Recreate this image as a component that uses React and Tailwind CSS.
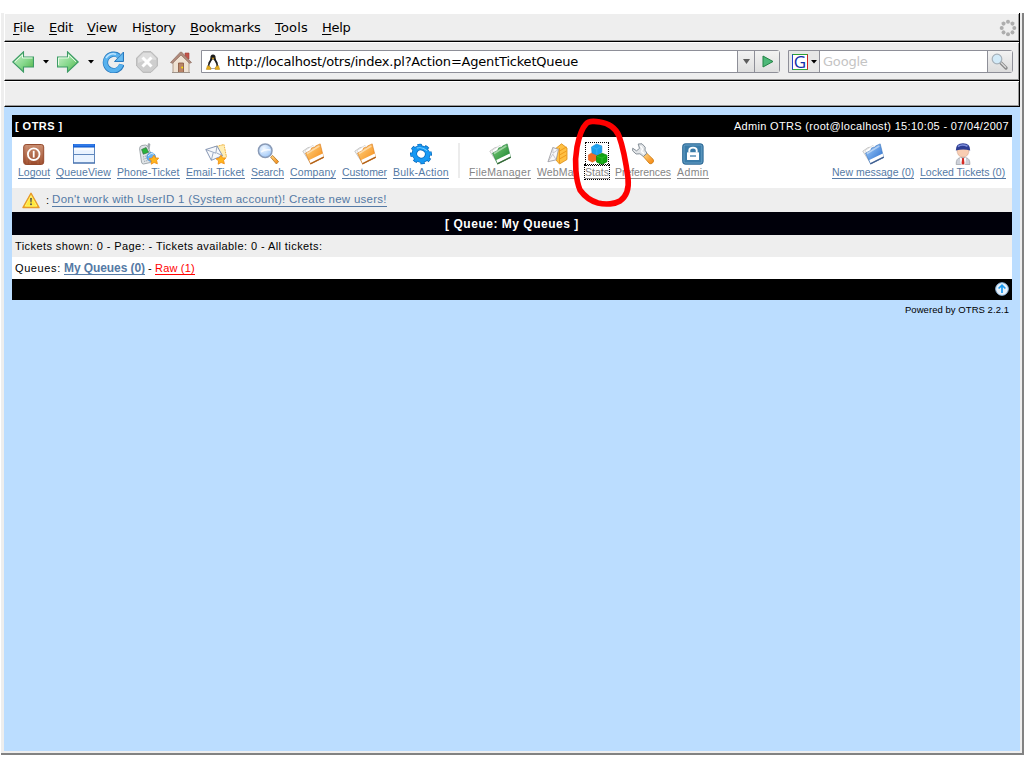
import React from 'react';

const Defs = () => (
  <svg width="0" height="0" className="absolute">
    <defs>
      <linearGradient id="green" x1="0" y1="0" x2="1" y2="1">
        <stop offset="0" stopColor="#d2f3d0" /><stop offset="0.55" stopColor="#86d88c" /><stop offset="1" stopColor="#4fae3e" />
      </linearGradient>
      <linearGradient id="orange" x1="0" y1="0" x2="1" y2="1">
        <stop offset="0" stopColor="#ffd98a" /><stop offset="1" stopColor="#f58208" />
      </linearGradient>
      <linearGradient id="leaf" x1="0" y1="0" x2="1" y2="1">
        <stop offset="0" stopColor="#7fd07c" /><stop offset="1" stopColor="#0e7a26" />
      </linearGradient>
      <linearGradient id="azure" x1="0" y1="0" x2="1" y2="1">
        <stop offset="0" stopColor="#a8d4ff" /><stop offset="1" stopColor="#1c62c8" />
      </linearGradient>
      <linearGradient id="brown" x1="0" y1="0" x2="0" y2="1">
        <stop offset="0" stopColor="#c98d70" /><stop offset="1" stopColor="#9b4a2a" />
      </linearGradient>
      <radialGradient id="lens" cx="0.4" cy="0.35" r="0.7">
        <stop offset="0" stopColor="#f2f8ff" /><stop offset="1" stopColor="#9cc6f8" />
      </radialGradient>
    </defs>
  </svg>
);

const Icon = ({ children, size = 22 }) => (
  <svg width={size} height={size} viewBox="0 0 22 22" className="block shrink-0">{children}</svg>
);

const Star = () => (
  <path d="M16 12.2l1.5 2.7 3.2.2-2.1 2.4.8 3.3-3.3-1.3-2.9 1.7.3-3.4-2.5-2 3.2-.8z" fill="#ffb61c" stroke="#f08a10" strokeWidth=".8" />
);

const Folder = ({ fill, edge }) => (
  <Icon>
    <path d="M.8 8.2L6 4.600l2.500-.4 2 5-2.500 10.300z" fill="#f4f4f4" stroke="#bdbdbd" strokeWidth=".8" />
    <path d="M3.200 7.400L11 2.300l3 5-6 10z" fill="#fff" stroke="#c9c9c9" strokeWidth=".6" />
    <path d="M3.500 10.200L8.500 7.500l1.300-2.700 2.700-.3 1-1.500L18.200.9l3.400 13.600L8.500 20.800z" fill={fill} stroke={edge} strokeWidth=".6" />
    <path d="M7.300 17L20.700 10.600l.9 3.300-13 6.500z" fill="#fff" />
    <path d="M8.300 20.800L21.700 14.200" stroke={edge} strokeWidth="1.300" />
    <path d="M8.300 20.800L21.700 14.200" stroke="#5a3326" strokeOpacity=".3" strokeWidth="1.300" />
    <path d="M5 10.500L17.300 3" stroke="#fff" strokeOpacity=".45" strokeWidth="1.500" />
  </Icon>
);

const LogoutIcon = () => (
  <Icon>
    <rect x=".7" y="1.5" width="20" height="20" rx="2.4" fill="url(#brown)" stroke="#954b2e" />
    <path d="M4 2v19M7 2v19M15 2v19M18 2v19" stroke="#eab59a" strokeOpacity=".2" />
    <circle cx="10.7" cy="11.2" r="5.8" fill="none" stroke="#fff" strokeWidth="1.8" />
    <path d="M10.7 7.8v6.8" stroke="#fff" strokeWidth="1.8" />
  </Icon>
);
const QueueIcon = () => (
  <Icon>
    <path d="M0 1h22v19.500H0z" fill="#5f87bd" />
    <path d="M0 1h22v3.500H0z" fill="#1763da" />
    <path d="M1 2h20" stroke="#4a91f3" />
    <path d="M1 4.800h20v6.200H1zM1 12h20v7.500H1z" fill="#e9f3ff" />
    <path d="M1 4.800h20v2.500H1z" fill="#fafcff" />
    <path d="M0 20h22" stroke="#3b67a6" />
  </Icon>
);
const PhoneIcon = () => (
  <Icon>
    <path d="M9 5.500L10.400.6 12 1l-.8 4.900z" fill="#a6aeb4" stroke="#80898f" strokeWidth=".5" />
    <path d="M1.600 5.800Q1.500 3 4 2.500L7.500 2Q9.500 2.200 10.300 4.500L14.500 14.500l-2 5-7 1.500Q3.800 21 3.500 19z" fill="#e0e4e7" stroke="#8b959b" strokeWidth=".8" />
    <path d="M3.600 6.500l4.500-2 2.600 4.800-5.400 1.900z" fill="#27b53b" stroke="#3c6b49" strokeWidth=".7" />
    <path d="M5 14l6-2M5.300 16.200l6-2M6 18.400l4-1" stroke="#9aa4ab" strokeWidth="1" strokeDasharray="1.300 .9" />
    <circle cx="13.200" cy="14" r="4.300" fill="#69b2f2" stroke="#3385d1" strokeWidth=".7" />
    <path d="M10 13q3-4 6-2" stroke="#d6efff" fill="none" />
    <Star />
  </Icon>
);
const EmailIcon = () => (
  <Icon>
    <path d="M9 4L19 1.500 21.500 14 17 17z" fill="#ffeeb5" stroke="#ecab32" strokeWidth=".9" strokeDasharray="1.800 .7" />
    <path d="M.8 6.500L12 3l5.500 9.700L6.300 17.300z" fill="#f6f8fb" stroke="#8797b4" strokeWidth="1" />
    <path d="M.8 6.500l10 3.700L12 3M6.300 17.300L8.200 9.700m3.300.2l6 2.800" fill="none" stroke="#8797b4" strokeWidth=".8" />
    <Star />
  </Icon>
);
const SearchIcon = () => (
  <Icon>
    <path d="M13.6 14.2l2-1.8 6 6.2-2.2 2.4z" fill="url(#orange)" stroke="#ae7523" strokeWidth=".8" />
    <circle cx="8.2" cy="7.7" r="6.8" fill="url(#lens)" stroke="#8a9bb7" strokeWidth="1.5" />
    <path d="M4 9q4-3 9.5-2" fill="none" stroke="#fff" strokeWidth="1.6" strokeOpacity=".8" />
  </Icon>
);
const GearIcon = () => (
  <Icon>
    <g transform="translate(11 11) rotate(25) scale(1.030 .920)">
      <circle r="6.500" fill="none" stroke="#0668bb" strokeWidth="5.400" />
      <circle r="9.600" fill="none" stroke="#0668bb" strokeWidth="2.600" strokeDasharray="4.200 3.340" />
      <circle r="6.600" fill="none" stroke="#1699f4" strokeWidth="3.900" />
      <circle r="9.200" fill="none" stroke="#1699f4" strokeWidth="2" strokeDasharray="2.800 4.426" strokeDashoffset="-.6" />
      <path d="M-6-4Q-2-8 4-6" fill="none" stroke="#83d2ff" />
    </g>
  </Icon>
);
const WebMailIcon = () => (
  <Icon>
    <path d="M9 5.3L14.5.8 20 5v11.5L12.5 21 9 17z" fill="#ffc043" stroke="#d98a12" strokeWidth=".8" />
    <path d="M12.5 8l7-4M12.5 12l7-4M12.5 16l7-4M12.5 5v15" stroke="#f09a18" strokeWidth="1" />
    <path d="M5.800 4.500l5.700 1.800-2.300 10.500L1 18.700z" fill="#f8f8fa" stroke="#93939b" strokeWidth=".8" />
    <path d="M5.800 4.500l.2 5.700 5.500-3.900M1 18.700l4.800-7.500 3.400 5.600" fill="none" stroke="#b3b3ba" strokeWidth=".7" />
  </Icon>
);
const StatsIcon = () => (
  <Icon>
    <path d="M6.2 9.7l4.500 2v5l-4.300 2.500-4-2.200v-5z" fill="#f26c24" stroke="#e4591c" strokeWidth=".6" />
    <path d="M5.500 4l5-3L15.800 3v6.200l-4.600 3-5.200-2.300z" fill="#1ba1ef" stroke="#128bd4" strokeWidth=".6" />
    <path d="M5.800 4l5 1.800L15.500 3M10.800 5.800v5.500" fill="none" stroke="#4bb8f8" strokeWidth=".6" />
    <path d="M10.500 13l5.500-2.800 5 2v6.500l-5 2.800-5.500-2.500z" fill="#11a512" stroke="#078209" strokeWidth=".7" />
    <path d="M10.800 13.200l5.200 1.800 4.800-2.500M16 15v5.500" fill="none" stroke="#35c232" strokeWidth=".7" />
  </Icon>
);
const WrenchIcon = () => (
  <Icon>
    <path d="M11.200 13.300l3.300-3.300 6.500 6.200c2 2.200-1.500 6-3.900 4z" fill="url(#orange)" stroke="#c9780c" strokeWidth=".8" />
    <path d="M.7 5.200l3.800 2.600 3-2.400L6.200 1 10 .8l3.200 3.400-.2 3 2 3-3.600 3.300-3.500-2.700-3.800.2L.6 7.800z" fill="#e2e5e8" stroke="#7b848d" strokeWidth=".9" />
    <path d="M8.500 3l2 3-1 2.500 2.700 2.200" fill="none" stroke="#fff" strokeWidth="1.300" />
  </Icon>
);
const LockIcon = () => (
  <Icon>
    <rect x=".7" y=".8" width="20.4" height="20.4" rx="2.5" fill="#3b7ca9" stroke="#2d6894" />
    <rect x="2" y="2" width="17.8" height="18" rx="1.5" fill="none" stroke="#76adce" strokeOpacity=".7" />
    <rect x="5" y="9.3" width="12" height="7.8" rx=".6" fill="#fff" />
    <path d="M7.300 9.500V7.200q0-2.600 3.700-2.600t3.700 2.600v2.300" fill="none" stroke="#fff" strokeWidth="1.900" />
    <path d="M8 13h6" stroke="#3d7eaa" strokeWidth="1.3" />
  </Icon>
);
const AgentIcon = () => (
  <Icon>
    <path d="M4.200 21.500q-.4-6.200 4.300-7h5q4.700.8 4.400 7z" fill="#cdd0d8" stroke="#999da5" strokeWidth=".7" />
    <path d="M7.800 14.200L11 16.200l3.200-2-1 7.300H8.800z" fill="#fff" />
    <path d="M10.200 15h1.600l.7 5.500-1.500 1.200-1.500-1.200z" fill="#d32b24" />
    <path d="M5 6h12q.4 7.700-6 8.200Q4.600 13.700 5 6z" fill="#f8cdb2" stroke="#c9977e" strokeWidth=".5" />
    <path d="M3.800 7.600Q3.600.3 11 .3t7.200 7.300Q11.500 5.200 3.800 7.600z" fill="#2e3d93" />
    <path d="M6 3.500q4-3 9.500-.2" stroke="#7d8edb" fill="none" strokeWidth="1.600" />
  </Icon>
);

const Nav = ({ icon, label, box, muted, focus }) => (
  <div className={`flex shrink-0 flex-col items-center ${box}`}>
    <div className={focus ? 'outline-1 outline-dotted outline-black' : ''}>{icon}</div>
    <a
      className={`block h-[14px] w-full border-b text-[10.5px] leading-[15px] whitespace-nowrap ${
        focus ? 'outline-1 outline-dotted outline-black' : ''
      } ${muted ? 'border-[#8b8b8b] text-[#858585]' : 'border-[#557aa5] text-[#557aa5]'}`}
    >
      {label}
    </a>
  </div>
);

const orangeFolder = <Folder fill="url(#orange)" edge="#d87714" />;

const Caret = () => (
  <svg width="6" height="4" viewBox="0 0 6 4" className="block shrink-0"><path d="M0 0h6L3 3.500z" fill="#000" /></svg>
);

const Menu = ({ k, pre = '', rest, box }) => (
  <span className={`shrink-0 whitespace-nowrap ${box}`}>{pre}<u className="underline-offset-2">{k}</u>{rest}</span>
);

export default function App() {
  return (
    <div className="relative h-[768px] w-[1024px] overflow-hidden bg-white pt-[13px] font-['Liberation_Sans',Arial,sans-serif] text-[11px] text-black">
      <Defs />
      <div className="ml-px flex h-[742px] w-[1023px] flex-col border-r-2 border-b-2 border-[#828282] bg-[#eeeeee] pr-[2px] pb-[2px] pl-[3px]">
        <div className="flex flex-col border-r border-black font-['DejaVu_Sans',sans-serif] text-[13px]">
          <div className="flex h-[29px] shrink-0 items-center border-t border-l border-b border-t-white border-l-white border-b-black pl-2 shadow-[inset_-1px_-1px_0_#9a9a9a]">
            <Menu k="F" rest="ile" box="w-[36px] tracking-[-0.1px]" />
            <Menu k="E" rest="dit" box="w-[38px] tracking-[-0.3px]" />
            <Menu k="V" rest="iew" box="w-[45px] tracking-[-0.15px]" />
            <Menu pre="Hi" k="s" rest="tory" box="w-[58px] tracking-[-0.4px]" />
            <Menu k="B" rest="ookmarks" box="w-[85px] tracking-[-0.22px]" />
            <Menu k="T" rest="ools" box="w-[47px] tracking-[0.2px]" />
            <Menu k="H" rest="elp" box="w-[40px] tracking-[-0.3px]" />
            <svg width="18" height="18" viewBox="-9 -9 18 18" className="mr-[2px] ml-auto block">
              {[0, 45, 90, 135, 180, 225, 270, 315].map((a) => (
                <circle key={a} cy="-6.300" r="2" fill="#adadad" transform={`rotate(${a})`} />
              ))}
            </svg>
          </div>

          <div className="flex h-[39px] shrink-0 items-center border-t border-l border-b border-t-white border-l-white border-b-black pl-[7px] shadow-[inset_-1px_-1px_0_#9a9a9a]">
            <Icon><path d="M.8 11L11.500.8v5.200h10v10h-10V21z" fill="url(#green)" stroke="#3d9b66" strokeWidth="1.100" /><path d="M2.800 11L10.500 3.800V7h10" fill="none" stroke="#e8fae8" /></Icon>
            <div className="flex w-[23px] justify-center"><Caret /></div>
            <Icon><path d="M21.200 11L10.500.8v5.200H.5v10h10V21z" fill="url(#green)" stroke="#3d9b66" strokeWidth="1.100" /><path d="M1.500 14V7h10V3.800l7.500 7" fill="none" stroke="#e8fae8" /></Icon>
            <div className="flex w-[23px] justify-center"><Caret /></div>
            <Icon>
              <path d="M19.800 13.500A8.300 8.300 0 1 1 17 5" fill="none" stroke="#2a79bd" strokeWidth="5.400" />
              <path d="M12.500 10.500h9V1z" fill="#54aeea" stroke="#2a79bd" />
              <path d="M19.300 13.500A8.100 8.100 0 1 1 16.800 5.300" fill="none" stroke="#58b2ee" strokeWidth="4" />
              <path d="M4 7Q8 1.500 14 3.300" fill="none" stroke="#bfe5ff" strokeWidth="1.500" />
              <path d="M14.500 9.500h6v-6z" fill="#6bbcf0" />
            </Icon>
            <div className="w-3" />
            <Icon>
              <path d="M7 .7h8L21.300 7v8L15 21.300H7L.7 15V7z" fill="#cecece" stroke="#b3b3b3" />
              <path d="M2 9V7.500L7.500 2h7L20 7.500V9q-9-2-18 3z" fill="#dedede" />
              <path d="M6.500 6.500l9 9m0-9l-9 9" stroke="#fff" strokeWidth="3" />
            </Icon>
            <div className="w-3" />
            <Icon>
              <path d="M15 2h4v6h-4z" fill="#c4544a" stroke="#9d4138" strokeWidth=".6" />
              <path d="M3 10l8-8 8 8v11.500H3z" fill="#efe2d3" stroke="#a58e78" strokeWidth=".8" />
              <path d="M.5 11.500L10.500 1h1l10 10.500-2 .8L11 4l-8.500 8.300z" fill="#b08a7c" stroke="#8e6d60" strokeWidth=".7" />
              <path d="M8.500 12h5v9.500h-5z" fill="#b98468" stroke="#84543c" strokeWidth=".8" />
              <circle cx="12.200" cy="16.500" r=".9" fill="#ffe500" />
              <path d="M2 21.500h18" stroke="#9e948c" />
            </Icon>
            <div className="ml-[9px] flex h-[23px] w-[579px] rounded-r-[3px] border border-[#8e8f98]">
              <div className="flex flex-1 items-center bg-white pl-[3px]">
                <svg width="16" height="16" viewBox="0 0 16 16" className="block">
                  <path d="M8 .5q2.800 0 2.600 3.500.2 2 2 4.600 1.200 3-.6 5.900H4q-1.800-3-.6-5.900 2-2.600 2-4.600Q5.200.5 8 .5z" fill="#1c1c1c" />
                  <path d="M8 5q2.200 2 3.200 5t-.8 4.300H5.600Q3.700 13 4.800 10T8 5z" fill="#fff" />
                  <path d="M6.500 3.700h3L8 5.500z" fill="#e6a817" />
                  <path d="M2.500 11.500l3 1.500.5 2.400H1.300zM13.500 11.500l-3 1.500-.5 2.400h4.700z" fill="#e5ad1d" stroke="#b8820d" strokeWidth=".5" />
                </svg>
                <span className="ml-[6px] tracking-[-0.2px] whitespace-nowrap">http://localhost/otrs/index.pl?Action=AgentTicketQueue</span>
              </div>
              <div className="flex w-[17px] items-center justify-center border-l border-[#8e8f98] bg-gradient-to-b from-[#f2f2f2] to-[#dedede]">
                <svg width="7" height="5" className="block"><path d="M0 0h7L3.500 5z" fill="#5c5c5c" /></svg>
              </div>
              <div className="flex w-[25px] items-center justify-center border-l border-[#8e8f98] bg-gradient-to-b from-[#f2f2f2] to-[#dedede]">
                <svg width="12" height="13" className="mr-[-2px] block"><path d="M1 1l10 5.500L1 12z" fill="#4db878" stroke="#238346" /></svg>
              </div>
            </div>
            <div className="ml-2 flex h-[23px] w-[225px] rounded-r-[3px] border border-[#8e8f98]">
              <div className="flex w-[31px] items-center border-r border-[#8e8f98] bg-[#e7e7e7] pl-[3px]">
                <div className="flex h-4 w-4 items-center justify-center border border-t-[#2d9e33] border-r-[#d22222] border-b-[#34a93a] border-l-[#2345c8] bg-white font-['Open_Sans',sans-serif] text-[17px] leading-none text-[#0f2ba8]">G</div>
                <div className="ml-[3px]"><Caret /></div>
              </div>
              <div className="flex flex-1 items-center bg-white pl-[3px] tracking-[-0.2px] text-[#c4c4c4]">Google</div>
              <div className="flex w-[25px] items-center justify-center border-l border-[#8e8f98] bg-gradient-to-b from-[#f2f2f2] to-[#dcdcdc]">
                <svg width="17" height="17" viewBox="0 0 17 17" className="mr-[2px] block">
                  <path d="M9.500 9.500l5.500 5.500" stroke="#8b8b8b" strokeWidth="3.200" strokeLinecap="round" />
                  <path d="M10 9.600l5 5" stroke="#e4e4e4" strokeWidth="1.300" />
                  <circle cx="6" cy="6" r="4.800" fill="#d2eaf8" stroke="#a6b1ba" strokeWidth="1.200" />
                </svg>
              </div>
            </div>
          </div>

          <div className="h-[26px] shrink-0 border-t border-l border-b border-t-white border-l-white border-b-black shadow-[inset_-1px_-1px_0_#9a9a9a]" />
        </div>

        <div className="flex-1 bg-[#bbddff] px-2 pt-2">
          <div className="w-[1000px]">
            <div className="flex h-[22px] items-center justify-between bg-black px-[3px] text-white">
              <b className="tracking-[0.45px]">[ OTRS ]</b>
              <span className="tracking-[0.32px]">Admin OTRS (root@localhost) 15:10:05 - 07/04/2007</span>
            </div>

            <div className="flex h-[51px] gap-[6px] bg-white px-[6px] pt-[6px]">
              <Nav icon={<LogoutIcon />} label="Logout" box="w-[32px] tracking-[0px]" />
              <Nav icon={<QueueIcon />} label="QueueView" box="w-[55px] tracking-[0.08px]" />
              <Nav icon={<PhoneIcon />} label="Phone-Ticket" box="w-[63px] tracking-[0.08px]" />
              <Nav icon={<EmailIcon />} label="Email-Ticket" box="w-[59px] tracking-[0.08px]" />
              <Nav icon={<SearchIcon />} label="Search" box="w-[33px] tracking-[-0.05px]" />
              <Nav icon={orangeFolder} label="Company" box="w-[46px] tracking-[0.15px]" />
              <Nav icon={orangeFolder} label="Customer" box="w-[45px] tracking-[-0.06px]" />
              <Nav icon={<GearIcon />} label="Bulk-Action" box="w-[56px] tracking-[0.25px]" />
              <div className="ml-[3px] h-[35px] w-[2px] shrink-0 bg-[#ececec]" />
              <Nav muted icon={<Folder fill="url(#leaf)" edge="#288040" />} label="FileManager" box="ml-[3px] w-[62px] tracking-[0.33px]" />
              <Nav muted icon={<WebMailIcon />} label="WebMail" box="w-[42px] tracking-[0.15px]" />
              <Nav muted focus icon={<StatsIcon />} label="Stats" box="w-[24px]" />
              <Nav muted icon={<WrenchIcon />} label="Preferences" box="w-[56px] tracking-[-0.05px]" />
              <Nav muted icon={<LockIcon />} label="Admin" box="w-[32px] tracking-[0.4px]" />
              <Nav icon={<Folder fill="url(#azure)" edge="#3974bc" />} label="New message (0)" box="ml-auto w-[82px]" />
              <Nav icon={<AgentIcon />} label="Locked Tickets (0)" box="w-[86px]" />
            </div>

            <div className="flex h-[24px] items-center bg-[#eeeeee] pl-[10px]">
              <svg width="18" height="17" viewBox="0 0 18 17" className="block">
                <path d="M9 1.300L17 15.500H1z" fill="#ffe51c" stroke="#e79a2b" strokeWidth="1.500" strokeLinejoin="round" />
                <path d="M9 3.500L14.800 14H3.200z" fill="#ffe93a" stroke="#fff8b0" strokeWidth=".5" />
                <path d="M8.100 6h1.800l-.4 4.500h-1z" fill="#555" /><circle cx="9" cy="12.300" r="1" fill="#555" />
              </svg>
              <span className="ml-[6px]">:</span>
              <a className="ml-[3px] block h-[14px] border-b border-[#557aa5] text-[11.5px] leading-[13px] tracking-[0.27px] whitespace-nowrap text-[#557aa5]">
                Don't work with UserID 1 (System account)! Create new users!
              </a>
            </div>

            <div className="flex h-[23px] items-center justify-center bg-[#00000a] text-[12px] font-bold tracking-[0.52px] text-white">[ Queue: My Queues ]</div>

            <div className="flex h-[22px] items-center bg-[#eeeeee] px-[3px] tracking-[0.42px]">
              Tickets shown: 0 - Page: - Tickets available: 0 - All tickets:
            </div>

            <div className="flex h-[22px] items-center bg-white px-[3px]">
              <span className="w-[49px] tracking-[0.6px]">Queues:</span>
              <a className="block h-[14px] w-[81px] border-b border-[#557aa5] text-[12px] leading-[14px] font-bold tracking-[-0.08px] whitespace-nowrap text-[#557aa5]">My Queues (0)</a>
              <span className="w-[10px] pl-[3px]">-</span>
              <a className="block h-[14px] w-[40px] border-b border-[#f00] leading-[15px] tracking-[0.2px] whitespace-nowrap text-[#f00]">Raw (1)</a>
            </div>

            <div className="flex h-[21px] items-center justify-end bg-black pr-[3px] pb-px">
              <svg width="14" height="14" viewBox="0 0 14 14" className="block">
                <circle cx="7" cy="7" r="6.300" fill="#e7f1fb" stroke="#91bce3" />
                <path d="M7 11V3.500M3.600 6.500L7 3.200l3.400 3.300" fill="none" stroke="#1b9af0" strokeWidth="1.700" />
              </svg>
            </div>
            <div className="flex h-[20px] items-center justify-end pr-[3px] text-[9.5px] tracking-[0.05px]">Powered by OTRS 2.2.1</div>
          </div>
        </div>
      </div>

      <svg width="64" height="96" viewBox="570 114 64 96" className="pointer-events-none absolute top-[114px] left-[570px]">
        <path
          d="M586 124C581 129 579 137 577 147C574 163 576 180 580 190C585 197 591 201 598 203C606 205 615 204 620 201C627 196 629 187 628 178C626 163 623 147 619 136C616 128 608 123 600 122C595 121 588 121 586 124"
          fill="none" stroke="#f00" strokeWidth="5.600" strokeLinecap="round" strokeLinejoin="round"
        />
      </svg>
    </div>
  );
}
